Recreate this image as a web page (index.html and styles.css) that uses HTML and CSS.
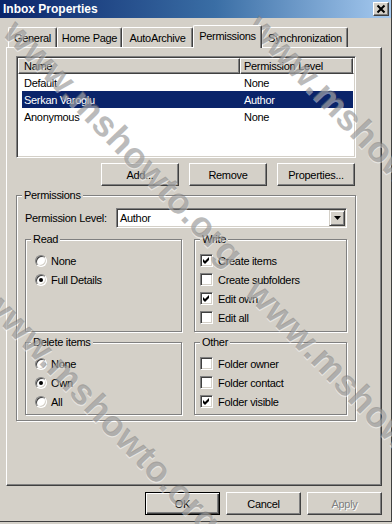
FILE: index.html
```html
<!DOCTYPE html>
<html>
<head>
<meta charset="utf-8">
<title>Inbox Properties</title>
<link rel="stylesheet" href="styles.css">
</head>
<body>
<div class="window">
  <div class="titlebar">
    <span class="title">Inbox Properties</span>
    <span class="close"><svg width="14" height="12" viewBox="0 0 14 12"><path d="M3.5 2.5 L10.5 9.5 M10.5 2.5 L3.5 9.5" stroke="#000" stroke-width="2" fill="none"/></svg></span>
  </div>
  <div class="tabs">
    <div class="tab tab-general">General</div>
    <div class="tab tab-home">Home Page</div>
    <div class="tab tab-auto">AutoArchive</div>
    <div class="tab tab-perm active">Permissions</div>
    <div class="tab tab-sync">Synchronization</div>
  </div>
  <div class="panel">
    <div class="listview">
      <div class="lv-header">
        <div class="lv-col col-name">Name</div>
        <div class="lv-col col-level">Permission Level</div>
        <div class="lv-col col-rest"></div>
      </div>
      <div class="lv-row"><span class="c1">Default</span><span class="c2">None</span></div>
      <div class="lv-row selected"><span class="c1">Serkan Varoglu</span><span class="c2">Author</span></div>
      <div class="lv-row"><span class="c1">Anonymous</span><span class="c2">None</span></div>
    </div>
    <div class="btn-row">
      <button class="btn btn-wide">Add...</button>
      <button class="btn btn-wide">Remove</button>
      <button class="btn btn-wide">Properties...</button>
    </div>
    <div class="group perm-group">
      <div class="legend">Permissions</div>
      <div class="level-row">
        <span class="level-label">Permission Level:</span>
        <div class="combo">
          <span class="combo-text">Author</span>
          <span class="combo-btn"><svg width="7" height="4" viewBox="0 0 7 4"><polygon points="0,0 7,0 3.5,4" fill="#000"/></svg></span>
        </div>
      </div>
      <div class="subgroups">
        <div class="group sub-tall">
          <div class="legend">Read</div>
          <div class="options">
            <div class="opt"><span class="radio"></span><span>None</span></div>
            <div class="opt"><span class="radio on"></span><span>Full Details</span></div>
          </div>
        </div>
        <div class="group sub-tall">
          <div class="legend">Write</div>
          <div class="options">
            <div class="opt"><span class="check on"><svg width="9" height="9" viewBox="0 0 9 9"><polygon points="1,3 3,5 7,1 7,4 3,8 1,6" fill="#000"/></svg></span><span>Create items</span></div>
            <div class="opt"><span class="check"></span><span>Create subfolders</span></div>
            <div class="opt"><span class="check on"><svg width="9" height="9" viewBox="0 0 9 9"><polygon points="1,3 3,5 7,1 7,4 3,8 1,6" fill="#000"/></svg></span><span>Edit own</span></div>
            <div class="opt"><span class="check"></span><span>Edit all</span></div>
          </div>
        </div>
        <div class="group sub-short">
          <div class="legend">Delete items</div>
          <div class="options">
            <div class="opt"><span class="radio"></span><span>None</span></div>
            <div class="opt"><span class="radio on"></span><span>Own</span></div>
            <div class="opt"><span class="radio"></span><span>All</span></div>
          </div>
        </div>
        <div class="group sub-short">
          <div class="legend">Other</div>
          <div class="options">
            <div class="opt"><span class="check"></span><span>Folder owner</span></div>
            <div class="opt"><span class="check"></span><span>Folder contact</span></div>
            <div class="opt"><span class="check on"><svg width="9" height="9" viewBox="0 0 9 9"><polygon points="1,3 3,5 7,1 7,4 3,8 1,6" fill="#000"/></svg></span><span>Folder visible</span></div>
          </div>
        </div>
      </div>
    </div>
  </div>
  <div class="footer">
    <button class="btn btn-std btn-default">OK</button>
    <button class="btn btn-std">Cancel</button>
    <button class="btn btn-std disabled">Apply</button>
  </div>
</div>
<div class="watermarks">
  <span class="wm wm-tl">www.mshowto.org</span>
  <span class="wm wm-bl">www.mshowto.org</span>
  <span class="wm wm-tr">www.mshowto.org</span>
  <span class="wm wm-br">www.mshowto.org</span>
</div>
</body>
</html>
```
FILE: styles.css
```css
* { box-sizing: border-box; }
html, body { margin: 0; padding: 0; }
body {
  width: 392px;
  height: 524px;
  overflow: hidden;
  position: relative;
  background: #d4d0c8;
  font-family: "Liberation Sans", Arial, sans-serif;
  font-size: 11px;
  letter-spacing: -0.3px;
  color: #000;
}
.window {
  width: 392px;
  height: 522px;
  border-right: 1px solid #404040;
  border-bottom: 1px solid #404040;
  display: flex;
  flex-direction: column;
}
.titlebar {
  height: 18px;
  flex: none;
  background: linear-gradient(to right, #0a246a 0%, #3a6ea5 55%, #a6caf0 100%);
  display: flex;
  align-items: center;
  justify-content: space-between;
  padding: 0 2px 0 3px;
}
.title {
  color: #fff;
  font-weight: bold;
  font-size: 12px;
  letter-spacing: 0;
}
.close {
  width: 16px;
  height: 14px;
  background: #d4d0c8;
  border-top: 1px solid #fff;
  border-left: 1px solid #fff;
  border-right: 1px solid #404040;
  border-bottom: 1px solid #404040;
  box-shadow: inset -1px -1px 0 #808080;
  display: flex;
  align-items: center;
  justify-content: center;
}
.close svg { display: block; }
.tabs {
  display: flex;
  align-items: flex-end;
  height: 22px;
  margin: 7px 0 0 8px;
  flex: none;
}
.tab {
  height: 20px;
  border-top: 1px solid #fff;
  border-left: 1px solid #fff;
  border-right: 1px solid #404040;
  box-shadow: inset -1px 0 0 #808080;
  border-radius: 2px 2px 0 0;
  display: flex;
  align-items: center;
  justify-content: center;
  white-space: nowrap;
}
.tab-general { width: 49px; }
.tab-home { width: 65px; }
.tab-auto { width: 71px; }
.tab-perm { width: 69px; }
.tab-sync { width: 86px; }
.tab.active {
  height: 23px;
  margin-bottom: -1px;
  padding-bottom: 3px;
  position: relative;
  z-index: 1;
  background: #d4d0c8;
}
.panel {
  width: 376px;
  height: 439px;
  margin-left: 6px;
  flex: none;
  border-top: 1px solid #fff;
  border-left: 1px solid #fff;
  border-right: 1px solid #404040;
  border-bottom: 1px solid #404040;
  box-shadow: inset -1px -1px 0 #808080;
  padding: 8px 0 0 9px;
}
.listview {
  width: 340px;
  height: 102px;
  background: #fff;
  border: 1px solid;
  border-color: #808080 #fff #fff #808080;
  box-shadow: inset 1px 1px 0 #404040, inset -1px -1px 0 #d4d0c8;
  padding: 1px;
}
.lv-header {
  display: flex;
  height: 16px;
}
.lv-col {
  height: 16px;
  background: #d4d0c8;
  border-top: 1px solid #fff;
  border-left: 1px solid #fff;
  border-right: 1px solid #404040;
  border-bottom: 1px solid #404040;
  box-shadow: inset -1px -1px 0 #808080;
  display: flex;
  align-items: center;
  white-space: nowrap;
}
.col-name { width: 222px; padding-left: 5px; }
.col-level { width: 113px; padding-left: 3px; }
.col-rest { flex: 1; border-right: none; box-shadow: none; }
.lv-row {
  display: flex;
  align-items: center;
  height: 17px;
  margin-left: 4px;
  width: 331px;
  white-space: nowrap;
}
.lv-row .c1 { width: 218px; padding-left: 2px; }
.lv-row .c2 { padding-left: 4px; }
.lv-row.selected { background: #0a246a; color: #fff; }
.btn-row {
  display: flex;
  justify-content: flex-end;
  gap: 10px;
  width: 339px;
  margin-top: 5px;
}
.btn {
  height: 23px;
  background: #d4d0c8;
  border: 1px solid;
  border-color: #fff #404040 #404040 #fff;
  box-shadow: inset -1px -1px 0 #808080;
  font-family: inherit;
  font-size: 11px;
  letter-spacing: -0.3px;
  color: #000;
  padding: 0;
}
.btn-wide { width: 78px; }
.btn-std { width: 75px; }
.btn-default {
  border: 1px solid #000;
  box-shadow: inset 1px 1px 0 #fff, inset -1px -1px 0 #404040, inset -2px -2px 0 #808080;
}
.btn.disabled { color: #808080; text-shadow: 1px 1px 0 #fff; }
.group {
  border: 1px solid #808080;
  box-shadow: 1px 1px 0 #fff, inset 1px 1px 0 #fff;
  display: flex;
  flex-direction: column;
}
.legend {
  align-self: flex-start;
  margin: -7px 0 0 5px;
  padding: 0 2px;
  line-height: 13px;
  height: 13px;
  background: #d4d0c8;
  white-space: nowrap;
}
.perm-group {
  width: 340px;
  height: 226px;
  margin-top: 9px;
}
.level-row {
  display: flex;
  align-items: center;
  margin: 6px 0 0 8px;
  height: 20px;
}
.level-label { width: 91px; white-space: nowrap; }
.combo {
  width: 231px;
  height: 20px;
  background: #fff;
  border: 1px solid;
  border-color: #808080 #fff #fff #808080;
  box-shadow: inset 1px 1px 0 #404040, inset -1px -1px 0 #d4d0c8;
  padding: 1px;
  display: flex;
  align-items: center;
}
.combo-text { flex: 1; padding-left: 2px; }
.combo-btn {
  width: 16px;
  height: 16px;
  background: #d4d0c8;
  border-top: 1px solid #d4d0c8;
  border-left: 1px solid #d4d0c8;
  border-right: 1px solid #404040;
  border-bottom: 1px solid #404040;
  box-shadow: inset 1px 1px 0 #fff, inset -1px -1px 0 #808080;
  display: flex;
  align-items: center;
  justify-content: center;
}
.combo-btn svg { display: block; }
.subgroups {
  display: grid;
  grid-template-columns: 157px 153px;
  grid-template-rows: 93px 73px;
  column-gap: 12px;
  row-gap: 10px;
  margin: 11px 0 0 8px;
}
.options {
  display: flex;
  flex-direction: column;
  margin-top: 5px;
}
.opt {
  display: flex;
  align-items: center;
  height: 19px;
  white-space: nowrap;
}
.radio {
  width: 12px;
  height: 12px;
  margin: 0 4px 0 9px;
  border-radius: 50%;
  background: #fff;
  border: 1px solid;
  border-color: #808080 #fff #fff #808080;
  box-shadow: inset 1px 1px 0 #404040, inset -1px -1px 0 #d4d0c8;
  position: relative;
  flex: none;
}
.radio.on::after {
  content: "";
  position: absolute;
  left: 3px;
  top: 3px;
  width: 4px;
  height: 4px;
  border-radius: 50%;
  background: #000;
}
.check {
  width: 13px;
  height: 13px;
  margin: 0 5px 0 5px;
  background: #fff;
  border: 1px solid;
  border-color: #808080 #fff #fff #808080;
  box-shadow: inset 1px 1px 0 #404040, inset -1px -1px 0 #d4d0c8;
  display: flex;
  align-items: center;
  justify-content: center;
  flex: none;
}
.check svg { display: block; }
.footer {
  display: flex;
  justify-content: flex-end;
  gap: 6px;
  width: 382px;
  margin-top: 6px;
}
.watermarks {
  position: absolute;
  left: 0;
  top: 0;
  width: 392px;
  height: 524px;
  overflow: hidden;
  pointer-events: none;
}
.wm {
  position: absolute;
  font-family: "Liberation Sans", Arial, sans-serif;
  font-weight: bold;
  font-size: 36px;
  line-height: 37px;
  letter-spacing: 0.5px;
  white-space: nowrap;
  color: rgba(120, 120, 120, 0.5);
  text-shadow: 1px 1px 0 rgba(255, 255, 255, 0.45);
  transform-origin: 0 22px;
  transform: rotate(46deg);
}
.wm-tl { left: 8px; top: 6px; }
.wm-bl { left: -14px; top: 274px; }
.wm-tr { left: 252px; top: 0; }
.wm-br { left: 250px; top: 265px; }
```
